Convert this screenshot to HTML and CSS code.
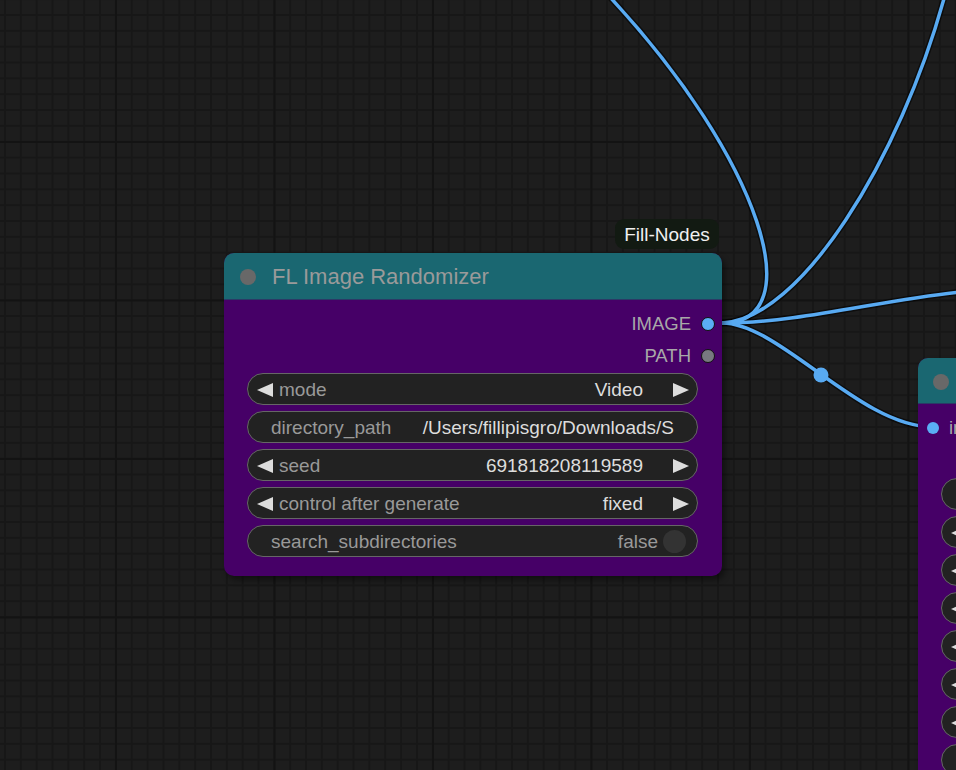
FILE: index.html
```html
<!DOCTYPE html>
<html>
<head>
<meta charset="utf-8">
<link rel="stylesheet" href="styles.css">
</head>
<body>
<div class="canvas">
  <svg class="links" width="956" height="770" viewBox="0 0 956 770">
    <g class="link-shadow">
      <path d="M722,323 C812,323 762,160 608,-5"/>
      <path d="M722,323 C800,320 900,160 945,-5"/>
      <path d="M722,323 C800,323 880,300 960,292"/>
      <path d="M722,323 C780,323 860,427 933,427"/>
    </g>
    <g class="link-line">
      <path d="M722,323 C812,323 762,160 608,-5"/>
      <path d="M722,323 C800,320 900,160 945,-5"/>
      <path d="M722,323 C800,323 880,300 960,292"/>
      <path d="M722,323 C780,323 860,427 933,427"/>
    </g>
    <circle class="link-mid" cx="821" cy="375" r="7.5"/>
  </svg>

  <div class="badge">Fill-Nodes</div>

  <div class="node node-main">
    <div class="node-title">
      <span class="title-dot"></span>
      <span class="title-text">FL Image Randomizer</span>
    </div>
    <div class="node-body">
      <div class="slot out"><span class="slot-label">IMAGE</span><i class="dot blue"></i></div>
      <div class="slot out"><span class="slot-label">PATH</span><i class="dot grey"></i></div>
      <div class="widgets">
        <div class="widget combo">
          <svg class="arrow" viewBox="0 0 16 14"><polygon points="0,7 16,0 16,14"/></svg>
          <span class="w-label">mode</span>
          <span class="w-value">Video</span>
          <svg class="arrow" viewBox="0 0 16 14"><polygon points="16,7 0,0 0,14"/></svg>
        </div>
        <div class="widget text">
          <span class="w-label">directory_path</span>
          <span class="w-value">/Users/fillipisgro/Downloads/S</span>
        </div>
        <div class="widget combo">
          <svg class="arrow" viewBox="0 0 16 14"><polygon points="0,7 16,0 16,14"/></svg>
          <span class="w-label">seed</span>
          <span class="w-value">691818208119589</span>
          <svg class="arrow" viewBox="0 0 16 14"><polygon points="16,7 0,0 0,14"/></svg>
        </div>
        <div class="widget combo">
          <svg class="arrow" viewBox="0 0 16 14"><polygon points="0,7 16,0 16,14"/></svg>
          <span class="w-label">control after generate</span>
          <span class="w-value">fixed</span>
          <svg class="arrow" viewBox="0 0 16 14"><polygon points="16,7 0,0 0,14"/></svg>
        </div>
        <div class="widget toggle">
          <span class="w-label">search_subdirectories</span>
          <span class="w-value off">false</span>
          <span class="knob"></span>
        </div>
      </div>
    </div>
  </div>

  <div class="node node-side">
    <div class="node-title">
      <span class="title-dot"></span>
    </div>
    <div class="node-body">
      <div class="slot in"><i class="dot blue"></i><span class="slot-label">in</span></div>
      <div class="widgets side-widgets">
        <div class="widget text"></div>
        <div class="widget combo"><svg class="arrow" viewBox="0 0 16 14"><polygon points="0,7 16,0 16,14"/></svg></div>
        <div class="widget combo"><svg class="arrow" viewBox="0 0 16 14"><polygon points="0,7 16,0 16,14"/></svg></div>
        <div class="widget combo"><svg class="arrow" viewBox="0 0 16 14"><polygon points="0,7 16,0 16,14"/></svg></div>
        <div class="widget combo"><svg class="arrow" viewBox="0 0 16 14"><polygon points="0,7 16,0 16,14"/></svg></div>
        <div class="widget combo"><svg class="arrow" viewBox="0 0 16 14"><polygon points="0,7 16,0 16,14"/></svg></div>
        <div class="widget combo"><svg class="arrow" viewBox="0 0 16 14"><polygon points="0,7 16,0 16,14"/></svg></div>
        <div class="widget text"></div>
      </div>
    </div>
  </div>
</div>
</body>
</html>
```

FILE: styles.css
```css
* { box-sizing: border-box; }

html, body {
  margin: 0;
  padding: 0;
  background: #1d1d1d;
}

body {
  font-family: "Liberation Sans", Arial, Helvetica, sans-serif;
}

.canvas {
  position: relative;
  width: 956px;
  height: 770px;
  overflow: hidden;
  background-color: #1d1d1d;
  background-image:
    linear-gradient(to right, #131313 2px, transparent 2px),
    linear-gradient(to bottom, #131313 2px, transparent 2px),
    linear-gradient(to right, #171717 2px, transparent 2px),
    linear-gradient(to bottom, #171717 2px, transparent 2px);
  background-size:
    158.5px 158.5px,
    158.5px 158.5px,
    15.85px 15.85px,
    15.85px 15.85px;
  background-position:
    -43.5px -17.5px,
    -43.5px -17.5px,
    4px 14px,
    4px 14px;
}

.links {
  position: absolute;
  left: 0;
  top: 0;
}

.link-shadow path {
  fill: none;
  stroke: rgba(0, 0, 0, 0.55);
  stroke-width: 6.5;
}

.link-line path {
  fill: none;
  stroke: #58aaf2;
  stroke-width: 3.5;
}

.link-mid {
  fill: #58aaf2;
}

.badge {
  position: absolute;
  left: 615px;
  top: 219px;
  width: 104px;
  height: 30px;
  border-radius: 9px;
  background: #121a12;
  color: #f0f0f0;
  font-size: 19px;
  display: flex;
  align-items: center;
  justify-content: center;
  padding-top: 1px;
}

.node {
  position: absolute;
  border-radius: 10px;
  background: #460067;
  box-shadow: 3px 4px 6px rgba(0, 0, 0, 0.45);
  overflow: hidden;
}

.node-main {
  left: 224px;
  top: 253px;
  width: 498px;
  height: 323px;
}

.node-side {
  left: 918px;
  top: 358px;
  width: 400px;
  height: 460px;
}

.node-title {
  height: 47px;
  background: #1a6771;
  border-bottom: 1px solid #2a3a66;
  display: flex;
  align-items: center;
  padding-left: 16px;
  padding-top: 2px;
  gap: 16px;
}

.node-side .node-title {
  height: 46px;
  padding-left: 15px;
}

.title-dot {
  width: 16px;
  height: 16px;
  border-radius: 50%;
  background: #686868;
  flex: none;
}

.title-text {
  color: #9a9a9a;
  font-size: 22px;
  white-space: nowrap;
}

.node-body {
  padding-top: 8px;
}

.slot {
  height: 32px;
  display: flex;
  align-items: center;
  font-size: 18.5px;
  color: #a8a8a8;
  white-space: nowrap;
}

.slot.out {
  justify-content: flex-end;
  padding-right: 7px;
  gap: 10px;
}

.slot.in {
  padding-left: 9px;
  gap: 10px;
}

.dot {
  display: block;
  width: 14px;
  height: 14px;
  border-radius: 50%;
  border: 1.5px solid #111;
  flex: none;
}

.dot.blue { background: #5aaef5; }
.dot.grey { background: #787880; }

.slot.in .dot {
  border: none;
  width: 12px;
  height: 12px;
}

.widgets {
  display: flex;
  flex-direction: column;
  gap: 6px;
  margin-top: 1px;
  padding: 0 24px 0 23px;
}

.side-widgets {
  margin-top: 34px;
  padding-right: 0;
}

.widget {
  height: 32px;
  border-radius: 16px;
  background: #222222;
  border: 1px solid #666666;
  display: flex;
  align-items: center;
  font-size: 19px;
  white-space: nowrap;
  padding-top: 1px;
}

.widget.combo {
  padding-left: 9px;
  padding-right: 8px;
}

.widget.text,
.widget.toggle {
  padding-left: 23px;
  padding-right: 23px;
}

.widget.toggle {
  padding-right: 11px;
}

.arrow {
  width: 16px;
  height: 14px;
  flex: none;
  fill: #dddddd;
}

.w-label {
  color: #999999;
  margin-left: 6px;
}

.widget.text .w-label,
.widget.toggle .w-label {
  margin-left: 0;
}

.w-value {
  color: #dddddd;
  margin-left: auto;
}

.widget.combo .w-value {
  margin-right: 30px;
}

.w-value.off {
  color: #999999;
  margin-right: 5px;
}

.knob {
  width: 23px;
  height: 23px;
  border-radius: 50%;
  background: #333333;
  flex: none;
}
```
